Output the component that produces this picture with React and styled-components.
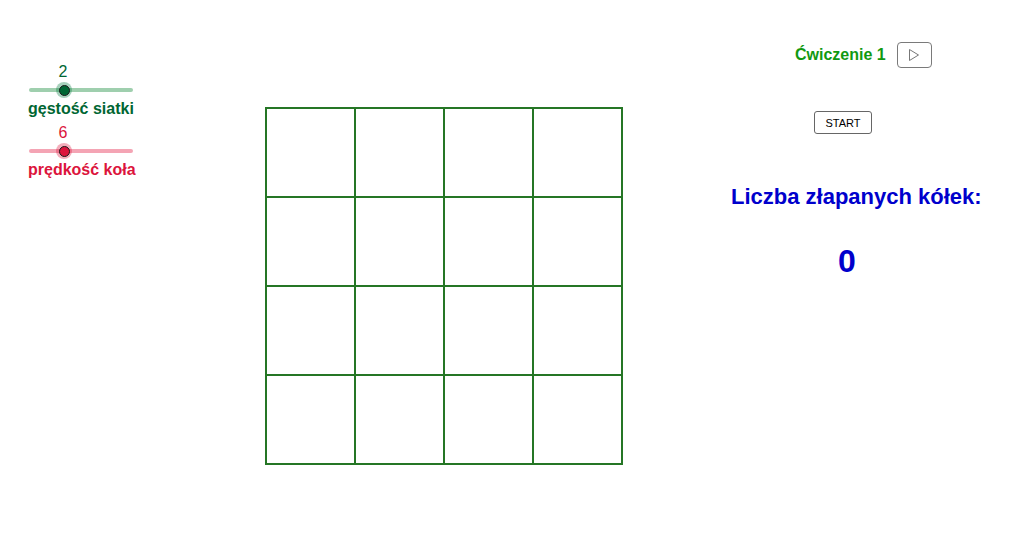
import styled, { createGlobalStyle } from 'styled-components';

const GlobalStyle = createGlobalStyle`
  html, body {
    margin: 0;
    padding: 0;
    background: #ffffff;
  }
  body {
    font-family: "Liberation Sans", Arial, sans-serif;
  }
`;

const sliders = [
  { value: 2, label: 'gęstość siatki', color: '#006633', track: '#9fcfae', halo: 'rgba(0, 120, 60, 0.35)' },
  { value: 6, label: 'prędkość koła', color: '#dc143c', track: '#f4a4b4', halo: 'rgba(220, 20, 60, 0.35)' },
];

const Stage = styled.div`
  display: flex;
  align-items: flex-start;
  width: 1034px;
  height: 558px;
  overflow: hidden;
`;

const SliderPanel = styled.div`
  flex: 0 0 265px;
  box-sizing: border-box;
  padding: 63px 0 0 28px;
  display: flex;
  flex-direction: column;
  gap: 6px;
`;

const SliderBlock = styled.div`
  display: flex;
  flex-direction: column;
  color: ${(p) => p.$color};
`;

const Value = styled.div`
  width: 70px;
  text-align: center;
  font-size: 16px;
  line-height: 18px;
`;

const Track = styled.div`
  position: relative;
  width: 104px;
  height: 18px;
  margin-left: 1px;
  &::before {
    content: '';
    position: absolute;
    left: 0;
    right: 0;
    top: 7px;
    height: 4px;
    border-radius: 2px;
    background: ${(p) => p.$track};
  }
`;

const Knob = styled.div`
  position: absolute;
  left: 27px;
  top: 1px;
  width: 16px;
  height: 16px;
  border-radius: 50%;
  background: ${(p) => p.$halo};
  display: flex;
  align-items: center;
  justify-content: center;
  &::after {
    content: '';
    width: 9px;
    height: 9px;
    border-radius: 50%;
    border: 1px solid #1a1a1a;
    background: ${(p) => p.$color};
  }
`;

const SliderLabel = styled.div`
  font-size: 16px;
  font-weight: bold;
  line-height: 19px;
  white-space: nowrap;
`;

const Board = styled.div`
  margin-top: 107px;
  width: 358px;
  height: 358px;
  box-sizing: border-box;
  padding: 2px;
  display: grid;
  grid-template-columns: repeat(4, 87px);
  grid-template-rows: repeat(4, 87px);
  gap: 2px;
  background: #257625;
`;

const Cell = styled.div`
  background: #ffffff;
`;

const RightPanel = styled.div`
  flex: 1;
  display: flex;
  flex-direction: column;
  align-items: flex-start;
`;

const ExerciseRow = styled.div`
  margin: 42px 0 0 172px;
  display: flex;
  align-items: center;
  gap: 11px;
  height: 26px;
`;

const ExerciseTitle = styled.span`
  font-size: 16px;
  font-weight: bold;
  color: #119911;
`;

const PlayButton = styled.button`
  width: 35px;
  height: 26px;
  padding: 0;
  border: 1px solid #7a7a7a;
  border-radius: 4px;
  background: #ffffff;
  display: flex;
  align-items: center;
  justify-content: center;
`;

const StartButton = styled.button`
  margin: 43px 0 0 191px;
  width: 58px;
  height: 23px;
  padding: 0;
  border: 1px solid #666666;
  border-radius: 3px;
  background: #ffffff;
  font-family: "Liberation Sans", Arial, sans-serif;
  font-size: 11px;
  color: #000000;
`;

const Heading = styled.div`
  margin: 50px 0 0 108px;
  font-size: 22px;
  font-weight: bold;
  line-height: 26px;
  color: #0000cc;
  white-space: nowrap;
`;

const Counter = styled.div`
  margin: 33px 0 0 215px;
  font-size: 32px;
  font-weight: bold;
  line-height: 36px;
  color: #0000cc;
`;

const PlayIcon = () => (
  <svg width="12" height="14" viewBox="0 0 12 14">
    <polygon points="1.5,1.5 10.5,7 1.5,12.5" fill="none" stroke="#777777" strokeWidth="1" />
  </svg>
);

export default function App() {
  return (
    <>
      <GlobalStyle />
      <Stage>
        <SliderPanel>
          {sliders.map((s) => (
            <SliderBlock key={s.label} $color={s.color}>
              <Value>{s.value}</Value>
              <Track $track={s.track}>
                <Knob $halo={s.halo} $color={s.color} />
              </Track>
              <SliderLabel>{s.label}</SliderLabel>
            </SliderBlock>
          ))}
        </SliderPanel>
        <Board>
          {Array.from({ length: 16 }, (_, i) => (
            <Cell key={i} />
          ))}
        </Board>
        <RightPanel>
          <ExerciseRow>
            <ExerciseTitle>Ćwiczenie 1</ExerciseTitle>
            <PlayButton aria-label="play">
              <PlayIcon />
            </PlayButton>
          </ExerciseRow>
          <StartButton>START</StartButton>
          <Heading>Liczba złapanych kółek:</Heading>
          <Counter>0</Counter>
        </RightPanel>
      </Stage>
    </>
  );
}
